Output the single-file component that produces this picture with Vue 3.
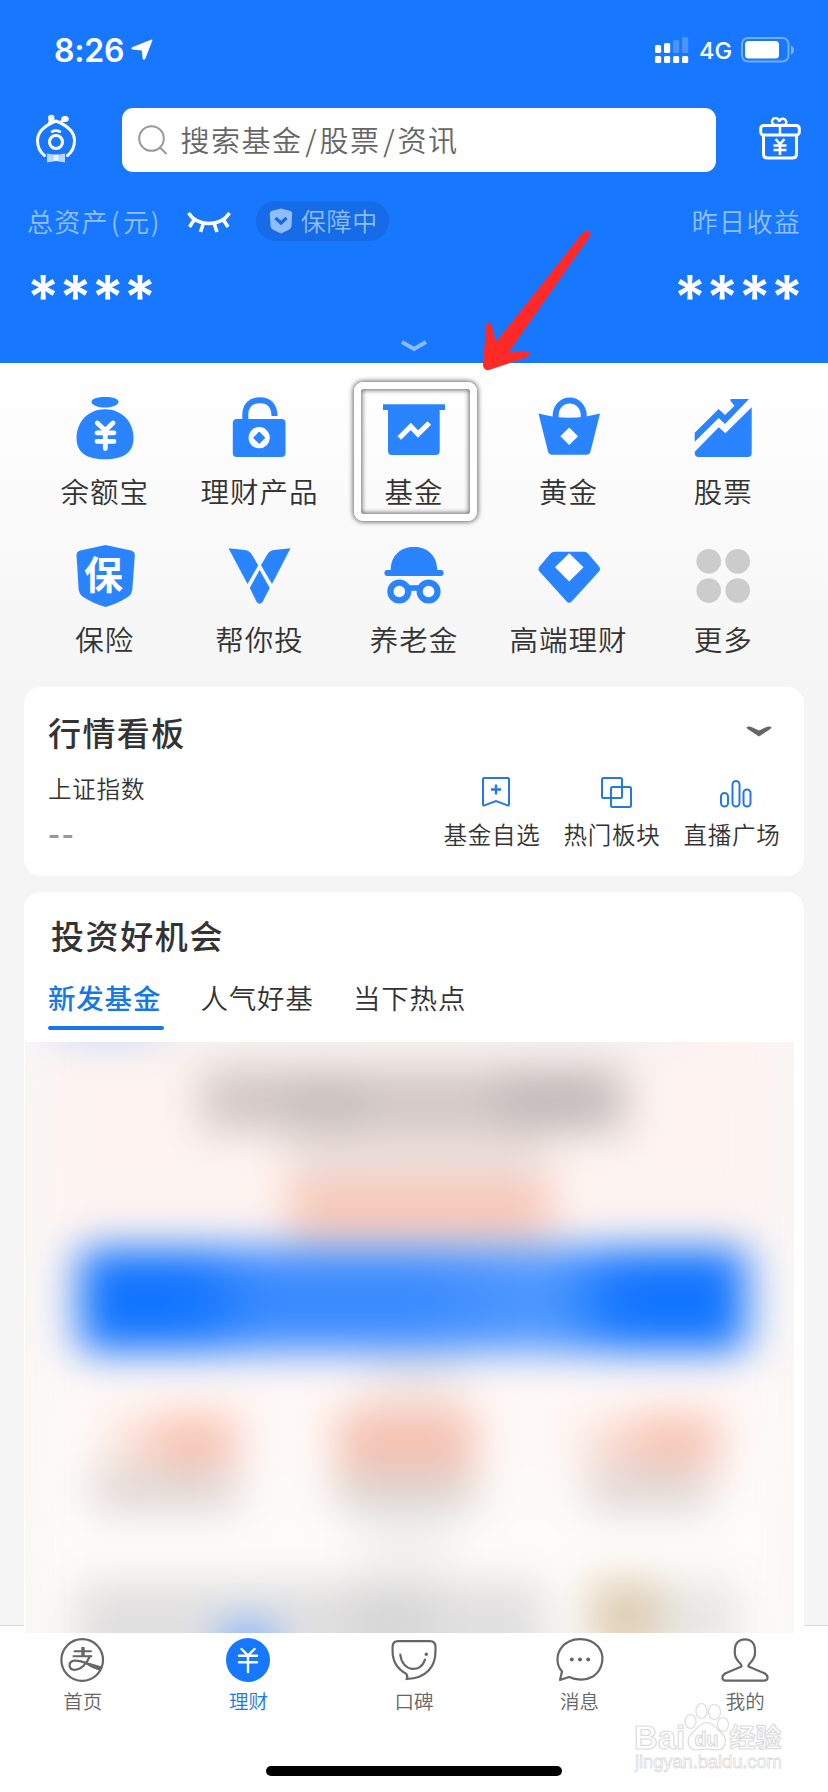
<script setup>
const services = [
  { id: 'bag', name: '余额宝' },
  { id: 'lock', name: '理财产品' },
  { id: 'fund', name: '基金' },
  { id: 'gold', name: '黄金' },
  { id: 'stock', name: '股票' },
  { id: 'shield', name: '保险' },
  { id: 'wing', name: '帮你投' },
  { id: 'pension', name: '养老金' },
  { id: 'premium', name: '高端理财' },
  { id: 'more', name: '更多' },
]
const shortcuts = [
  { id: 'mark', name: '基金自选' },
  { id: 'sector', name: '热门板块' },
  { id: 'live', name: '直播广场' },
]
const topics = ['新发基金', '人气好基', '当下热点']
const tabs = [
  { id: 'home', name: '首页' },
  { id: 'wealth', name: '理财' },
  { id: 'koubei', name: '口碑' },
  { id: 'message', name: '消息' },
  { id: 'me', name: '我的' },
]
</script>

<template>
  <div class="screen">
    <header class="header">
      <div class="status">
        <span class="time">8:26</span>
        <svg class="locate" width="22" height="22" viewBox="0 0 22 22">
          <path d="M20.6 .4 Q21.8 .4 21.2 2 L14.3 19.8 Q12.6 22 11.6 19.6 L10.8 11.4 L1.4 10.6 Q-.6 9.4 1.6 8.1Z" fill="#fff" />
        </svg>
        <svg class="signal" width="34" height="27" viewBox="0 0 34 27" fill="#fff">
          <rect x="0" y="8" width="6.2" height="8" rx="1.5" />
          <rect x="9" y="6" width="6.2" height="10" rx="1.5" />
          <rect x="18" y="3" width="6.2" height="13" rx="1.5" opacity=".22" />
          <rect x="27" y="0" width="6.2" height="16" rx="1.5" opacity=".22" />
          <rect v-for="i in 4" :key="i" :x="(i - 1) * 9" y="19" width="6.2" height="7" rx="1.5" />
        </svg>
        <span class="net">4G</span>
        <svg width="54" height="26" viewBox="0 0 54 26">
          <rect x="1" y="1" width="46.5" height="23.5" rx="6" fill="none" stroke="#fff" stroke-opacity=".4" stroke-width="2" />
          <rect x="4" y="4" width="34" height="17.5" rx="3.5" fill="#fff" />
          <path d="M50 8.5 Q53 10 53 13 Q53 16 50 17.5Z" fill="#fff" opacity=".45" />
        </svg>
      </div>

      <div class="search-row">
        <svg class="raise" width="42" height="50" viewBox="0 0 42 50" fill="none" stroke="#fff" stroke-width="3" stroke-linecap="round">
          <path d="M9.5 41.5 Q2.5 36 2.5 26.5 C2.5 17 11 11 21 7 C31 11 39.5 17 39.5 26.5 Q39.5 36 32.5 41.5" />
          <circle cx="21" cy="28" r="6.5" />
          <path d="M17 17.6 Q21 15.6 25 17.6" stroke-width="2.6" />
          <path d="M14.5 9 L16 4 M26 8.500 L29 4.500" />
          <ellipse cx="16.3" cy="4" rx="3.2" ry="3.2" fill="#fff" stroke="none" />
          <ellipse cx="30" cy="5" rx="3.8" ry="3" fill="#fff" stroke="none" />
          <path d="M12 39.500 L21 41 L30 39.500 V48.500 L21 47 L12 48.500Z" fill="#b9d7ff" stroke="none" />
          <rect x="18.500" y="40.500" width="5" height="6.500" fill="#e6f1ff" stroke="none" />
        </svg>
        <div class="search">
          <svg width="30" height="30" viewBox="0 0 30 30" fill="none" stroke="#999" stroke-width="2">
            <circle cx="13.500" cy="13.500" r="12.300" />
            <path d="M22 22.500 L28.500 29" />
          </svg>
          <span>搜索基金<i>/</i>股票<i>/</i>资讯</span>
        </div>
        <svg class="raise" width="42" height="43" viewBox="0 0 42 43" fill="none" stroke="#fff" stroke-width="3">
          <rect x="1.700" y="8.500" width="38.600" height="9.500" rx="3" />
          <path d="M4.500 18 V37 Q4.500 41 8.500 41 H33.500 Q37.500 41 37.500 37 V18" />
          <path d="M21 8 V17" stroke-width="2.400" />
          <path d="M20 8 H16 A3.500 3.500 0 1 1 20 5 Q21 1.500 24.500 1.800 A3.500 3.500 0 0 1 26 8 H22" stroke-width="2.400" />
          <path d="M16.500 22 L21 27 L25.500 22 M14.500 28.500 H27.500 M14.500 33 H27.500 M21 27 V38" stroke-width="2.600" />
        </svg>
      </div>

      <div class="assets">
        <span class="dim">总资产<i>(</i>元<i>)</i></span>
        <svg class="eye" width="44" height="22" viewBox="0 0 44 22" fill="none" stroke="#fff" stroke-width="3.600">
          <path d="M1.500 1 Q8 11.500 22 11.500 Q36 11.500 42.500 1" />
          <path d="M7 8 L2.500 15 M16.500 11 L13.500 20 M27 11 L30 20 M36.500 8 L41 15" />
        </svg>
        <span class="guard">
          <svg width="24" height="26" viewBox="0 0 24 26">
            <path d="M12 .5 L21.500 3 Q23.300 3.500 23.200 5.500 L22.500 18 Q22.300 20.500 20 21.700 L12 25.500 L4 21.700 Q1.700 20.500 1.500 18 L.8 5.500 Q.7 3.500 2.500 3Z" fill="#8fbdff" />
            <path d="M6.500 10 L12 15 L17.500 10" fill="none" stroke="#1568e0" stroke-width="3.200" />
          </svg>
          <span class="guard-text">保障中</span>
        </span>
        <span class="dim right">昨日收益</span>
      </div>

      <div class="masks">
        <div class="mask"><b v-for="i in 4" :key="i">*</b></div>
        <div class="mask"><b v-for="i in 4" :key="i">*</b></div>
      </div>
      <svg class="fold" width="26" height="14" viewBox="0 0 26 14">
        <path d="M1 3 L13 10 L25 3" fill="none" stroke="#8bbbff" stroke-width="4" />
      </svg>
      <svg class="pointer" width="120" height="150" viewBox="480 226 120 150">
        <path d="M582.500 233 L496 342 L491.500 325 Q488.500 320 486 325 L483 365 Q483.500 371 489 370 L527.500 357 Q531.500 353.500 527.500 351.300 L508.500 352.500 L590 236 Q592 231 587 230.500 Q584.500 230.500 582.500 233Z" fill="#ff2a27" />
      </svg>
    </header>

    <main class="main">
      <section class="services">
        <div v-for="s in services" :key="s.id" class="service" :class="{ picked: s.id === 'fund' }">
          <svg width="64" height="64" viewBox="0 0 64 64" fill="#2b84ff">
            <template v-if="s.id === 'bag'">
              <path d="M18.500 6 C18.500 2.500 24 1 32 1 C40 1 45.500 2.500 45.500 6 C45.500 9.500 38 11.600 32 11.600 C26 11.600 18.500 9.500 18.500 6Z" />
              <path d="M32 13.300 C50 13.300 60.500 27 60.500 42 C60.500 57 50 63.200 32 63.200 C14 63.200 3.500 57 3.500 42 C3.500 27 14 13.300 32 13.300Z" />
              <path d="M24.300 27 L32.300 34.500 L40 27 M24 36.800 H41 M24 45.400 H41 M32.300 35 V52.500" stroke="#fff" stroke-width="4.800" stroke-linecap="round" fill="none" />
            </template>
            <template v-else-if="s.id === 'lock'">
              <rect x="5.800" y="23" width="52.700" height="38" rx="4" />
              <path d="M18.300 24 V19 C18.300 9 24 4.200 33 4.200 C42 4.200 47.500 10 47.500 20" fill="none" stroke="#2b84ff" stroke-width="6" />
              <circle cx="32.200" cy="41.700" r="10.600" fill="#fff" />
              <path d="M32.200 35.500 L38.400 41.700 L32.200 47.900 L26 41.700Z" />
            </template>
            <template v-else-if="s.id === 'fund'">
              <path d="M1 8.300 H63 V14 H57.700 V55 Q57.700 59 53.700 59 H10 Q6 59 6 55 V14 H1Z" />
              <path d="M17.300 42 L28.800 30.500 L36 38 L47.300 27" stroke="#fff" stroke-width="5.200" fill="none" />
            </template>
            <template v-else-if="s.id === 'gold'">
              <path d="M18.700 22 V19 A13.500 14 0 0 1 46.700 19 V22" fill="none" stroke="#2b84ff" stroke-width="6" />
              <path d="M1.500 17.500 Q32 26 63 17.500 L53.500 55.500 Q52.700 58.700 49.500 58.700 H15 Q12 58.700 11 55.500Z" />
              <path d="M32.200 31.500 L41 40.200 L32.200 49 L23.400 40.200Z" fill="#fff" />
            </template>
            <template v-else-if="s.id === 'stock'">
              <path d="M3.700 55.700 L27.700 31.300 L34.400 37.300 L60.700 11.300 V57 Q60.700 61 56.700 61 H7.700 Q3.700 61 3.700 57Z" />
              <path d="M3.700 45.700 V36.700 L27.700 13 L34 19 L43.500 9.800 L39.500 5 V3 H58 L34 28 L27.700 22Z" />
            </template>
            <template v-else-if="s.id === 'shield'">
              <path d="M32.500 1 L58 6.500 Q62 7.500 61.800 11.500 L59.300 46 Q58.700 50 55.500 52.500 Q45 59.500 32.500 63 Q20 59.500 9.500 52.500 Q6.300 50 5.700 46 L3.500 11.500 Q3.300 7.500 7.300 6.500Z" />
              <text x="31" y="44.500" text-anchor="middle" class="bao">保</text>
            </template>
            <template v-else-if="s.id === 'wing'">
              <path d="M1.500 4.300 L18 6 Q22 6.500 24.500 10 L31.200 21.300 L20.500 40Z" />
              <path d="M63.500 4.300 L47 6 Q43 6.500 40.500 10 L34 21.300 L45 40Z" />
              <path d="M32.600 26 L42.800 44 L35.500 58 Q32.600 61.500 29.700 58 L22.800 44Z" />
            </template>
            <template v-else-if="s.id === 'pension'">
              <path d="M8.700 26 C9 11 19 3 32 3 C45 3 55 11 55.300 26 H59.500 Q61.700 26.500 61.700 29 Q61.700 31.700 59.500 32 H4.500 Q2.300 31.700 2.300 29 Q2.300 26.500 4.500 26Z" />
              <rect x="24" y="41.200" width="16" height="5.600" />
              <circle cx="17.300" cy="47.500" r="8.900" fill="#fff" stroke="#2b84ff" stroke-width="6.200" />
              <circle cx="46.600" cy="47.500" r="8.900" fill="#fff" stroke="#2b84ff" stroke-width="6.200" />
            </template>
            <template v-else-if="s.id === 'premium'">
              <path d="M17.500 7.700 H47 Q49.500 7.700 51 9.500 L62 22.500 Q64 25 62 27.500 L34.700 57.500 Q32.200 60 29.700 57.500 L2.500 27.500 Q.5 25 2.500 22.500 L13.500 9.500 Q15 7.700 17.500 7.700Z" />
              <path d="M32.200 9.300 L46.500 23.300 L32.200 37.500 L18 23.300Z" fill="#fff" />
            </template>
            <g v-else fill="#ccc">
              <circle cx="17.700" cy="17.300" r="12.300" />
              <circle cx="46.700" cy="17.300" r="12.300" />
              <circle cx="17.700" cy="46.500" r="12.300" />
              <circle cx="46.700" cy="46.500" r="12.300" />
            </g>
          </svg>
          <span>{{ s.name }}</span>
        </div>
      </section>

      <section class="card market">
        <div class="market-head">
          <h2>行情看板</h2>
          <svg width="26" height="12" viewBox="0 0 26 12">
            <path d="M1.500 .8 Q4 0 6 1.200 L13 4.500 L20 1.200 Q22 0 24.500 .8 Q26.500 1.500 24 3.200 L13 10.500 L2 3.200 Q-.5 1.500 1.500 .8Z" fill="#666" />
          </svg>
        </div>
        <div class="market-body">
          <div class="index">
            <span>上证指数</span>
            <span class="dash">--</span>
          </div>
          <div v-for="k in shortcuts" :key="k.id" class="shortcut">
            <svg width="34" height="34" viewBox="0 0 34 34" fill="none" stroke="#2478e5" stroke-width="2">
              <template v-if="k.id === 'mark'">
                <path d="M5 3 H29 Q30 3 30 4 V29.500 Q30 31 28.600 30.300 L17 26 L5.400 30.300 Q4 31 4 29.500 V4 Q4 3 5 3Z" />
                <path d="M17 9.500 V19.500 M12 14.500 H22" stroke-width="2.400" />
              </template>
              <template v-else-if="k.id === 'sector'">
                <rect x="3" y="3" width="20" height="20" rx="1.500" />
                <rect x="12" y="12" width="20" height="20" rx="1.500" />
              </template>
              <template v-else>
                <rect x="2" y="18" width="7" height="13.500" rx="3.500" />
                <rect x="13.500" y="6" width="7" height="25.500" rx="3.500" />
                <rect x="24.500" y="14.500" width="7" height="17" rx="3.500" />
              </template>
            </svg>
            <span>{{ k.name }}</span>
          </div>
        </div>
      </section>

      <section class="card chance">
        <h2>投资好机会</h2>
        <nav class="topics">
          <span v-for="(t, i) in topics" :key="t" :class="{ on: i === 0 }">{{ t }}</span>
        </nav>
        <svg class="veil" width="769" height="591" viewBox="0 0 769 591">
          <defs>
            <filter id="soft" x="-200" y="-200" width="1169" height="991" filterUnits="userSpaceOnUse" color-interpolation-filters="sRGB">
              <feGaussianBlur stdDeviation="22 20" />
            </filter>
            <linearGradient id="base" x1="0" y1="0" x2="0" y2="1">
              <stop offset="0" stop-color="#f9f7f5" />
              <stop offset=".1" stop-color="#fef3f0" />
              <stop offset=".34" stop-color="#fef4f1" />
              <stop offset=".62" stop-color="#fef9f7" />
              <stop offset=".85" stop-color="#fefcfa" />
              <stop offset="1" stop-color="#fafafa" />
            </linearGradient>
            <linearGradient id="button" x1="0" y1="0" x2="1" y2="0">
              <stop offset="0" stop-color="#1275ff" />
              <stop offset=".17" stop-color="#1275ff" />
              <stop offset=".27" stop-color="#3b8bff" />
              <stop offset=".5" stop-color="#3b8bff" />
              <stop offset=".7" stop-color="#5099ff" />
              <stop offset=".82" stop-color="#1275ff" />
              <stop offset="1" stop-color="#1275ff" />
            </linearGradient>
          </defs>
          <rect width="769" height="591" fill="#f9f8f7" />
          <g filter="url(#soft)">
            <rect x="18" y="-60" width="735" height="720" fill="url(#base)" />
            <rect x="28" y="-40" width="112" height="40" fill="#c9d9fb" />
            <rect x="160" y="-40" width="500" height="44" fill="#f4f3f0" />
            <rect x="176" y="26" width="426" height="64" fill="#d3c8c6" />
            <rect x="260" y="36" width="80" height="54" fill="#c8bfbd" />
            <rect x="474" y="28" width="110" height="60" fill="#c3baB9" />
            <rect x="262" y="90" width="260" height="46" fill="#ece0dd" />
            <rect x="264" y="138" width="262" height="58" fill="#f8c7b7" />
            <rect x="54" y="206" width="668" height="104" rx="8" fill="url(#button)" />
            <rect x="344" y="320" width="90" height="40" fill="#f0e6e3" />
            <rect x="84" y="376" width="44" height="44" fill="#fce0d6" />
            <rect x="128" y="372" width="84" height="56" fill="#fac4b4" />
            <rect x="68" y="424" width="144" height="46" fill="#e0d8d5" />
            <rect x="312" y="368" width="138" height="64" fill="#f6c1b0" />
            <rect x="312" y="428" width="138" height="42" fill="#dcd5d2" />
            <rect x="556" y="380" width="54" height="44" fill="#fbdcd1" />
            <rect x="606" y="372" width="88" height="58" fill="#f9c5b6" />
            <rect x="564" y="424" width="120" height="46" fill="#e0d9d6" />
            <rect x="335" y="470" width="90" height="64" fill="#f3f2f1" />
            <rect x="50" y="540" width="470" height="90" fill="#e1e0e0" />
            <rect x="320" y="540" width="90" height="70" fill="#d8d7d7" />
            <rect x="565" y="538" width="70" height="74" fill="#decdb4" />
            <rect x="635" y="540" width="80" height="74" fill="#e8e7e3" />
            <circle cx="223" cy="608" r="30" fill="#7aafff" />
          </g>
        </svg>
      </section>
    </main>

    <footer class="tabbar">
      <nav class="tabs">
        <div v-for="t in tabs" :key="t.id" class="tab" :class="{ on: t.id === 'wealth' }">
          <svg width="48" height="46" viewBox="0 0 48 46" fill="none" stroke="#666" stroke-width="2.200" stroke-linecap="round">
            <template v-if="t.id === 'home'">
              <g transform="translate(-.8 0)">
                <circle cx="24" cy="23" r="20.800" />
                <path d="M15.500 14.200 H33.500 M14.500 19.300 H34" stroke-width="2" stroke-linecap="butt" />
                <path d="M24.800 10 V19" stroke-width="3.400" stroke-linecap="butt" />
                <path d="M31.500 19.500 C28.500 27 22.500 32.800 16.500 32.800 C10 32.800 9.500 24.800 16 23.700 C20 23 25 25 30 27" stroke-width="2.200" />
                <path d="M24 24.300 L43.500 30 L42 33.500 Q32 30.500 24 24.300Z" fill="#666" stroke-width="1" />
              </g>
            </template>
            <template v-else-if="t.id === 'wealth'">
              <circle cx="24" cy="23" r="22" fill="#1777ff" stroke="none" />
              <path d="M17.500 12 L24 18.500 L30.500 12 M15 18.800 H33 M15 25.300 H33 M24 18.500 V35" stroke="#fff" stroke-width="2.400" />
            </template>
            <template v-else-if="t.id === 'koubei'">
              <path d="M8 4.200 H40 Q45.500 4.200 45.500 10 V14 C45.500 30 36 41.500 16.800 42 Q18 38.800 16 36.600 C7.500 32 2.600 24 2.600 14 V10 Q2.600 4.200 8 4.200Z" />
              <path d="M10.300 17.500 C12 35 31 36.500 35 22.500" />
              <circle cx="36.300" cy="17.200" r="1.700" fill="#666" stroke="none" />
            </template>
            <template v-else-if="t.id === 'message'">
              <path d="M4 43 L6 34.500 C-.3 27.500 .3 16.500 6 10 C14.500 -.2 33 -.6 42 9.500 C49.500 18.500 47 33 37 39.500 C30 43.500 20.500 43.500 13 40Z" stroke-linejoin="round" />
              <g fill="#666" stroke="none"><circle cx="15.800" cy="22.500" r="2" /><circle cx="24" cy="22.500" r="2" /><circle cx="32.200" cy="22.500" r="2" /></g>
            </template>
            <template v-else>
              <path d="M20.500 29.500 C22 26.500 13.800 24.500 13.800 16 V13 C13.800 6 18.300 2.300 24 2.300 C29.700 2.300 34 6 34 13 V16 C34 24.500 26 26.500 27.500 29.500 L44 36.500 Q47 38.500 46.500 41.500 Q46 43.600 43 43.600 H5 Q2 43.600 1.500 41.500 Q1 38.500 4 36.500Z" stroke-linejoin="round" />
            </template>
          </svg>
          <span>{{ t.name }}</span>
        </div>
      </nav>
      <div class="home-bar"></div>
      <svg class="mark" width="160" height="80" viewBox="630 1698 160 80" fill="#fff" stroke="#dcdcdc" stroke-width="1.200">
        <text class="latin" x="634" y="1748.500" font-size="34" textLength="51" lengthAdjust="spacingAndGlyphs">Bai</text>
        <ellipse cx="690.500" cy="1721.500" rx="5.500" ry="7" />
        <ellipse cx="701.500" cy="1711" rx="5.500" ry="7.500" />
        <ellipse cx="714.500" cy="1712" rx="6" ry="7.500" />
        <ellipse cx="723" cy="1724.500" rx="5.500" ry="7" />
        <path d="M707 1722.500 C714 1722.500 717 1729 721.500 1733 C728 1739 726 1750 717 1750 C712 1750 710 1749 707 1749 C704 1749 701 1750 697 1750 C687 1750 686 1739 692 1733 C697 1729 700 1722.500 707 1722.500Z" />
        <text class="latin" x="694.500" y="1746" font-size="20" textLength="24" lengthAdjust="spacingAndGlyphs">du</text>
        <text class="han" x="729.500" y="1747" font-size="26">经验</text>
        <text class="url" x="635" y="1768" font-size="18.500" textLength="147" stroke-width=".8">jingyan.baidu.com</text>
      </svg>
    </footer>
  </div>
</template>

<style>
body { margin: 0; background: #f5f5f5; }
</style>

<style scoped>
.screen {
  width: 828px;
  height: 1792px;
  overflow: hidden;
  position: relative;
  background: #f5f5f5;
  color: #333;
  font-family: "Noto Sans CJK SC", sans-serif;
  font-weight: 350;
}
svg { display: block; flex: none; }
i { font-style: normal; }
h2 { margin: 0; font-weight: 500; letter-spacing: 1.400px; }

.header {
  position: relative;
  z-index: 3;
  height: 363px;
  background: #1777ff;
  color: #fff;
}
.status {
  height: 100px;
  box-sizing: border-box;
  padding: 0 33px 0 54px;
  display: flex;
  align-items: center;
  font-family: Inter, sans-serif;
}
.time { width: 77px; font-size: 32px; font-weight: 600; letter-spacing: -.2px; }
.locate { margin-right: auto; }
.net { margin: 0 9px 0 10px; width: 33px; font-size: 23.500px; font-weight: 500; }

.search-row {
  height: 64px;
  margin-top: 8px;
  padding: 0 27px 0 35px;
  display: flex;
  align-items: center;
  justify-content: space-between;
}
.raise { margin-bottom: 3px; }
.search {
  width: 594px;
  height: 64px;
  box-sizing: border-box;
  margin-left: 1px;
  padding-left: 16px;
  border-radius: 11px;
  background: #fff;
  color: #666;
  display: flex;
  align-items: center;
  gap: 13px;
  font-size: 29px;
  letter-spacing: 1.500px;
}
.search span { padding-bottom: 3px; }
.search i { display: inline-block; width: 17px; text-align: center; letter-spacing: 0; }

.assets {
  height: 40px;
  margin-top: 29px;
  padding: 0 27px;
  display: flex;
  align-items: center;
  font-size: 26px;
}
.dim { color: #93c0ff; letter-spacing: 1.300px; padding-bottom: 2px; }
.dim i { display: inline-block; width: 11px; text-align: center; }
.dim i:first-child { width: 14px; }
.right { margin-left: auto; }
.eye { margin-left: 25.500px; margin-right: 25.500px; margin-top: 3px; }
.guard {
  width: 133px;
  height: 40px;
  box-sizing: border-box;
  padding-left: 12.500px;
  border-radius: 20px;
  background: #166be6;
  color: #8fbdff;
  display: flex;
  align-items: center;
  gap: 8px;
  font-size: 25px;
  letter-spacing: .8px;
}
.guard-text { padding-bottom: 2px; }
.masks {
  height: 50px;
  margin-top: 22px;
  padding: 0 25px 0 27px;
  display: flex;
  justify-content: space-between;
}
.mask { display: flex; }
.mask b {
  width: 32.300px;
  display: flex;
  justify-content: center;
  font: 600 60px/68px Inter, sans-serif;
}
.fold { margin: 26px auto 0; }
.pointer { position: absolute; left: 480px; top: 226px; }

.main { position: relative; z-index: 2; }
.services {
  height: 324px;
  box-sizing: border-box;
  padding: 33px 27.500px 0;
  display: grid;
  grid-template-columns: repeat(5, 1fr);
  grid-auto-rows: 148px;
  background: linear-gradient(#fff, #f5f5f5);
}
.service {
  position: relative;
  display: flex;
  flex-direction: column;
  align-items: center;
  gap: 10px;
  font-size: 28.500px;
  line-height: 42px;
  letter-spacing: 1px;
  white-space: nowrap;
}
.bao { font: 700 39px "Noto Sans CJK SC", sans-serif; fill: #fff; }
.picked::after {
  content: "";
  position: absolute;
  left: 17px;
  top: -14px;
  width: 109px;
  height: 125px;
  border: 7px solid #fff;
  border-radius: 9px;
  box-shadow: 0 0 5px 1px rgba(0, 0, 0, .6), inset 0 0 5px 1px rgba(0, 0, 0, .6);
}

.card { margin: 0 24px; background: #fff; border-radius: 17px; }
.market { height: 189px; }
.market-head {
  padding: 21px 32px 0 24px;
  height: 48px;
  display: flex;
  align-items: center;
  justify-content: space-between;
}
.market-head h2, .chance h2 { font-size: 33px; line-height: 48px; }
.market-body {
  display: flex;
  padding: 15px 12px 0 24px;
  font-size: 23.500px;
  line-height: 34px;
  letter-spacing: .8px;
}
.index { flex: 1; display: flex; flex-direction: column; gap: 12px; }
.dash { color: #999; font-family: "Liberation Sans", sans-serif; font-size: 36px; letter-spacing: 1.800px; }
.shortcut {
  width: 120px;
  padding-top: 4px;
  display: flex;
  flex-direction: column;
  align-items: center;
  gap: 8px;
}
.shortcut svg { margin-left: 8px; }

.chance {
  height: 741px;
  margin-top: 16px;
  border-radius: 17px 17px 0 0;
}
.chance h2 { padding: 19px 0 0 27px; letter-spacing: 1.600px; }
.topics {
  height: 71px;
  padding: 0 24px;
  display: flex;
  gap: 36.500px;
  font-size: 27.500px;
  line-height: 77px;
  letter-spacing: .8px;
}
.topics span { position: relative; width: 116px; white-space: nowrap; height: 71px; }
.topics .on { color: #1677e6; font-weight: 500; }
.topics .on::after {
  content: "";
  position: absolute;
  left: 0;
  bottom: 0;
  width: 116px;
  height: 4px;
  border-radius: 2px;
  background: #1677e6;
}
.veil { margin: 12px 0 0 1px; }

.tabbar {
  position: relative;
  height: 166px;
  margin-top: -8px;
  background: #fff;
  border-top: 1px solid #d9d9d9;
}
.tabs { display: flex; padding-top: 11px; }
.tab {
  flex: 1;
  display: flex;
  flex-direction: column;
  align-items: center;
  gap: 3px;
  color: #666;
  font-size: 19.500px;
  line-height: 30px;
}
.tab.on { color: #1777e8; }
.home-bar {
  width: 296px;
  height: 10px;
  margin: 50px auto 0;
  border-radius: 5px;
  background: #000;
}
.mark { position: absolute; left: 630px; top: 72px; }
.latin { font-family: "Liberation Sans", sans-serif; font-weight: 700; }
.han { font-family: "Noto Sans CJK SC", sans-serif; font-weight: 700; }
.url { font-family: "Liberation Sans", sans-serif; font-weight: 400; }
</style>
